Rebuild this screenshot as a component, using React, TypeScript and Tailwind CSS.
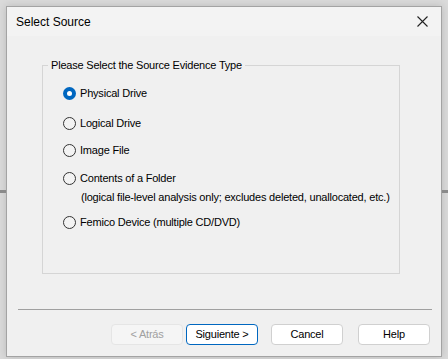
import React from 'react'

const font = { fontFamily: '"Liberation Sans", Arial, sans-serif' }

function Radio({ checked }: { checked?: boolean }) {
  if (checked) {
    return (
      <span className="flex h-[13px] w-[13px] shrink-0 items-center justify-center rounded-full bg-[#0067c0]">
        <span className="h-[5px] w-[5px] rounded-full bg-white" />
      </span>
    )
  }
  return <span className="h-[13px] w-[13px] shrink-0 rounded-full border border-[#333333] bg-[#f3f3f3]" />
}

function Option({ label, checked, className }: { label: string; checked?: boolean; className?: string }) {
  return (
    <div className={`flex items-center gap-[4px] ${className ?? ''}`}>
      <Radio checked={checked} />
      <span className="text-[11px] leading-[13px] tracking-[-0.2px] text-black">{label}</span>
    </div>
  )
}

function Button({ children, variant }: { children: React.ReactNode; variant?: 'default' | 'disabled' }) {
  const styles =
    variant === 'default'
      ? 'border-[#0067c0] bg-white text-black'
      : variant === 'disabled'
        ? 'border-[#e5e5e5] bg-[#f5f5f5] text-[#a0a0a0]'
        : 'border-[#d0d0d0] bg-white text-black'
  return (
    <button
      className={`flex h-[21px] w-[72px] items-center justify-center rounded-[4px] border text-[11px] tracking-[-0.2px] ${styles}`}
    >
      {children}
    </button>
  )
}

export default function App() {
  return (
    <div className="relative h-[359px] w-[448px] overflow-hidden bg-[#dadada] p-[6px]" style={font}>
      {/* bits of the window behind */}
      <div className="absolute left-0 top-[190px] h-[3px] w-[6px] bg-[#8a8a8a]" />
      <div className="absolute right-0 top-[190px] h-[3px] w-[6px] bg-[#8a8a8a]" />

      <div className="flex h-[351px] w-[436px] flex-col border border-[#a3a3a3] bg-[#f0f0f0] shadow-[0_0_8px_rgba(0,0,0,0.15)]">
        <div className="flex h-[29px] shrink-0 items-center justify-between bg-[#f3f3f3] pl-[9px] pr-[9px]">
          <span className="text-[12px] text-black">Select Source</span>
          <svg width="11" height="11" viewBox="0 0 11 11" className="mr-[4px]">
            <path d="M0.5 0.5 L10.5 10.5 M10.5 0.5 L0.5 10.5" stroke="#222" strokeWidth="1.1" />
          </svg>
        </div>

        <div className="flex flex-col pl-[35px] pt-[23px]">
          <fieldset className="h-[215px] w-[358px] border border-[#d5d5d5]">
            <legend className="ml-[5px] px-[3px] text-[11px] leading-[13px] tracking-[-0.2px] text-black">
              Please Select the Source Evidence Type
            </legend>
            <div className="pl-[20px]">
              <Option className="mt-[15px]" label="Physical Drive" checked />
              <Option className="mt-[17px]" label="Logical Drive" />
              <Option className="mt-[14px]" label="Image File" />
              <Option className="mt-[15px]" label="Contents of a Folder" />
              <div className="ml-[18px] mt-[6px] text-[11px] leading-[13px] tracking-[-0.2px] text-black">
                (logical file-level analysis only; excludes deleted, unallocated, etc.)
              </div>
              <Option className="mt-[12px]" label="Femico Device (multiple CD/DVD)" />
            </div>
          </fieldset>
        </div>

        <div className="ml-[11px] mr-[9px] mt-[35px] h-px bg-[#a0a0a0]" />

        <div className="mt-[14px] flex justify-end pr-[11px]">
          <Button variant="disabled">&lt; Atrás</Button>
          <div className="ml-[3px]">
            <Button variant="default">Siguiente &gt;</Button>
          </div>
          <div className="ml-[13px]">
            <Button>Cancel</Button>
          </div>
          <div className="ml-[15px]">
            <Button>Help</Button>
          </div>
        </div>
      </div>
    </div>
  )
}
